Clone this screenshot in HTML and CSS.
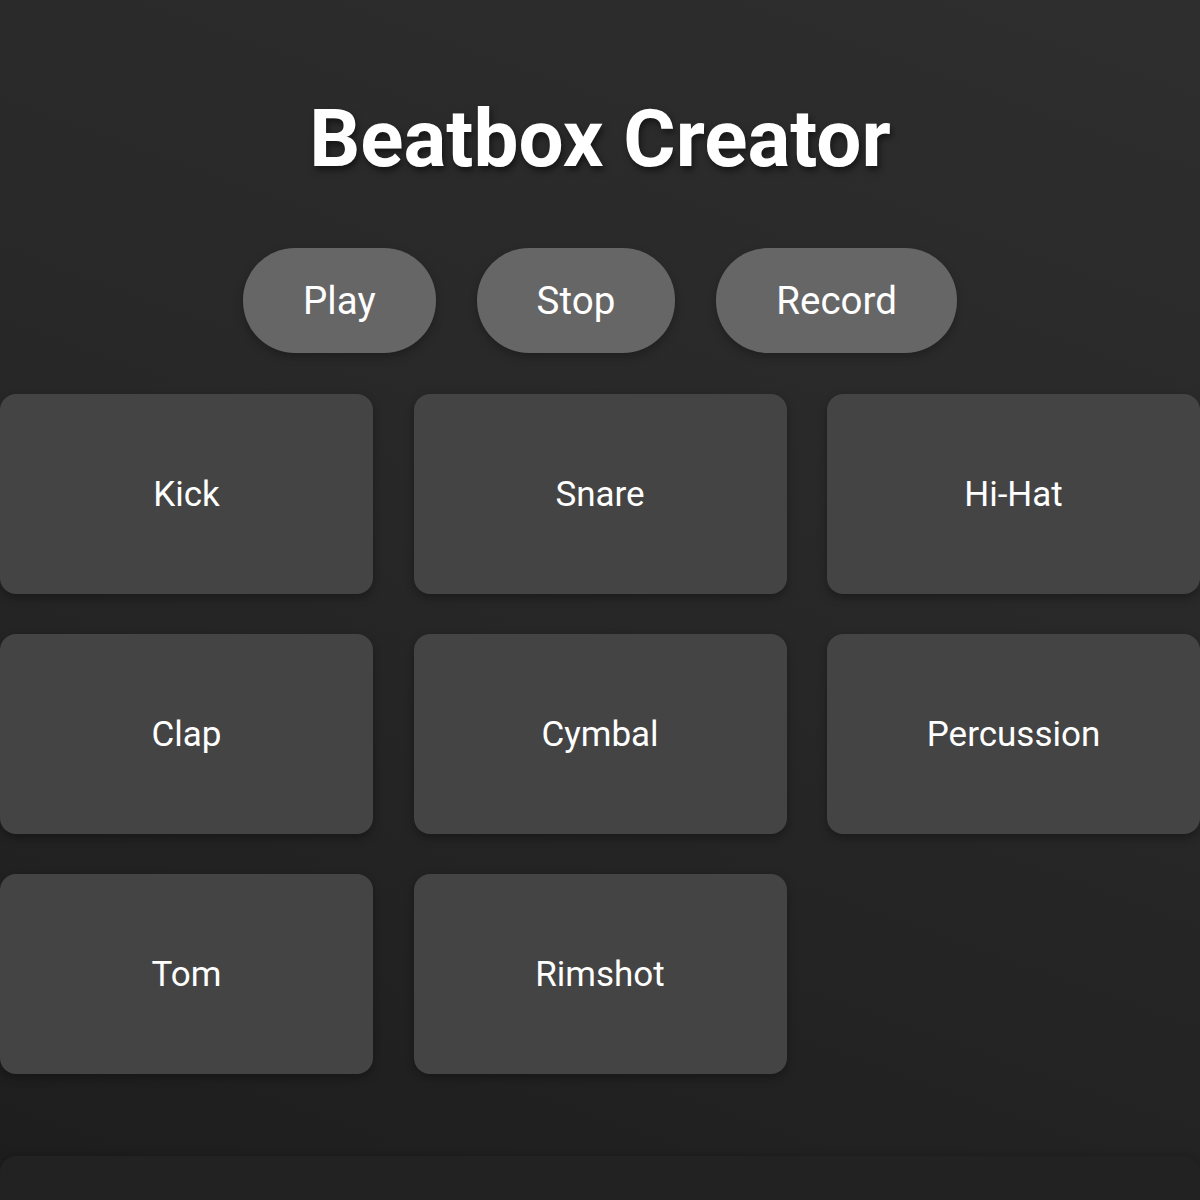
FILE: index.html
```html
<!DOCTYPE html>
<html lang="en">
<head>
  <meta charset="UTF-8">
  <meta name="viewport" content="width=device-width, initial-scale=1.0">
  <title>Beatbox Creator</title>
  <link rel="stylesheet" href="styles.css">
</head>
<body>
  <h1>Beatbox Creator</h1>

  <div class="controls">
    <button class="control">Play</button>
    <button class="control">Stop</button>
    <button class="control">Record</button>
  </div>

  <div class="pads">
    <div class="pad">Kick</div>
    <div class="pad">Snare</div>
    <div class="pad">Hi-Hat</div>
    <div class="pad">Clap</div>
    <div class="pad">Cymbal</div>
    <div class="pad">Percussion</div>
    <div class="pad">Tom</div>
    <div class="pad">Rimshot</div>
  </div>

  <div class="sequencer"></div>
</body>
</html>
```

FILE: styles.css
```css
html, body {
  height: 100%;
}
body {
  margin: 0;
  font-family: Roboto, "Liberation Sans", sans-serif;
  color: #fff;
  background: linear-gradient(200deg, #2e2e2e 0%, #272727 50%, #1d1d1d 100%);
  overflow: hidden;
}
h1 {
  font-size: 80px;
  font-weight: 700;
  text-align: center;
  margin: 92px 0 0;
  line-height: 94px;
  text-shadow: 2px 4px 6px rgba(0, 0, 0, 0.5);
}
.controls {
  display: flex;
  justify-content: center;
  gap: 41px;
  margin-top: 62px;
}
.control {
  background-color: #666;
  color: #fff;
  border: none;
  border-radius: 52px;
  padding: 30px 60px;
  font-family: inherit;
  font-size: 38.5px;
  line-height: 45px;
  cursor: pointer;
  box-shadow: 0 4px 8px rgba(0, 0, 0, 0.25);
}
.pads {
  display: grid;
  grid-template-columns: repeat(3, 1fr);
  gap: 40px 40.5px;
  margin-top: 41px;
}
.pad {
  height: 200px;
  background-color: #444;
  border-radius: 16px;
  display: flex;
  align-items: center;
  justify-content: center;
  font-size: 35px;
  box-shadow: 0 4px 10px rgba(0, 0, 0, 0.3);
}
.sequencer {
  margin-top: 82px;
  height: 200px;
  background-color: #222;
  border-radius: 16px;
  box-shadow: 0 -2px 6px rgba(0, 0, 0, 0.15);
}
```
